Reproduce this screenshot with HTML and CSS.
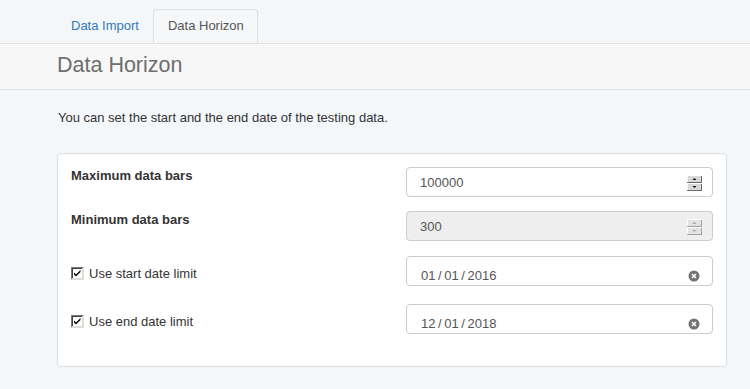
FILE: index.html
```html
<!DOCTYPE html>
<html lang="en">
<head>
    <meta charset="UTF-8">
    <meta name="viewport" content="width=device-width, initial-scale=1.0">
    <title>Data Horizon</title>
    <link rel="stylesheet" href="styles.css">
</head>
<body>
    <ul class="tabs">
        <li class="tab"><a href="#">Data Import</a></li>
        <li class="tab active"><a href="#">Data Horizon</a></li>
    </ul>

    <div class="page-header">
        <h1>Data Horizon</h1>
    </div>

    <div class="content">
        <p class="intro">You can set the start and the end date of the testing data.</p>

        <div class="panel">
            <div class="row row-max">
                <label class="label-bold">Maximum data bars</label>
                <div class="field">
                    <span class="value">100000</span>
                    <svg class="spin" width="15" height="16" viewBox="0 0 15 16">
                        <rect x="0" y="0" width="15" height="16" fill="#d8d8d8"/>
                        <path d="M0 0H15V1H1V7H0Z M0 8H15V9H1V15H0Z" fill="#fff"/>
                        <path d="M14 1H15V8H0V7H14Z M14 9H15V16H0V15H14Z" fill="#6a6a6a"/>
                        <path d="M5.5 5H9.5L7.5 3Z" fill="#000"/>
                        <path d="M5.5 11H9.5L7.5 13Z" fill="#000"/>
                    </svg>
                </div>
            </div>

            <div class="row row-min">
                <label class="label-bold">Minimum data bars</label>
                <div class="field disabled">
                    <span class="value">300</span>
                    <svg class="spin" width="15" height="16" viewBox="0 0 15 16">
                        <rect x="0" y="0" width="15" height="16" fill="#e2e2e2"/>
                        <path d="M0 0H15V1H1V7H0Z M0 8H15V9H1V15H0Z" fill="#fff"/>
                        <path d="M14 1H15V8H0V7H14Z M14 9H15V16H0V15H14Z" fill="#a0a0a0"/>
                        <path d="M5.5 5H9.5L7.5 3Z" fill="#a5a5a5"/>
                        <path d="M5.5 11H9.5L7.5 13Z" fill="#a5a5a5"/>
                    </svg>
                </div>
            </div>

            <div class="row row-start">
                <label class="check">
                    <svg class="box" width="13" height="13" viewBox="0 0 13 13">
                        <rect x="0" y="0" width="13" height="13" fill="#dcdcdc"/>
                        <path d="M0 0H12V1H1V12H0Z" fill="#7a7a7a"/>
                        <path d="M1 1H11V2H2V11H1Z" fill="#404040"/>
                        <rect x="2" y="2" width="9" height="9" fill="#fff"/>
                        <path d="M3 5.5L5 7.5L9.5 3V5L5 9.5L3 7.5Z" fill="#000"/>
                    </svg>
                    <span>Use start date limit</span>
                </label>
                <div class="field date">
                    <span class="value">01 / 01 / 2016</span>
                    <svg class="clear" width="12" height="12" viewBox="0 0 12 12">
                        <circle cx="6" cy="6" r="5.5" fill="#737373"/>
                        <path d="M4 4L8 8M8 4L4 8" stroke="#fff" stroke-width="1.5"/>
                    </svg>
                </div>
            </div>

            <div class="row row-end">
                <label class="check">
                    <svg class="box" width="13" height="13" viewBox="0 0 13 13">
                        <rect x="0" y="0" width="13" height="13" fill="#dcdcdc"/>
                        <path d="M0 0H12V1H1V12H0Z" fill="#7a7a7a"/>
                        <path d="M1 1H11V2H2V11H1Z" fill="#404040"/>
                        <rect x="2" y="2" width="9" height="9" fill="#fff"/>
                        <path d="M3 5.5L5 7.5L9.5 3V5L5 9.5L3 7.5Z" fill="#000"/>
                    </svg>
                    <span>Use end date limit</span>
                </label>
                <div class="field date">
                    <span class="value">12 / 01 / 2018</span>
                    <svg class="clear" width="12" height="12" viewBox="0 0 12 12">
                        <circle cx="6" cy="6" r="5.5" fill="#737373"/>
                        <path d="M4 4L8 8M8 4L4 8" stroke="#fff" stroke-width="1.5"/>
                    </svg>
                </div>
            </div>
        </div>
    </div>
</body>
</html>
```

FILE: styles.css
```css
body {
    margin: 0;
    background-color: #f3f7fa;
    font-family: "Liberation Sans", Arial, sans-serif;
    font-size: 13px;
    color: #333;
}
.tabs {
    display: flex;
    list-style: none;
    margin: 0;
    padding: 9px 0 0 56px;
}
.tab a {
    display: block;
    padding: 6px 13px 7px 14px;
    line-height: 20px;
    color: #337ab7;
    text-decoration: none;
    border: 1px solid transparent;
    border-bottom: none;
    border-radius: 4px 4px 0 0;
}
.tab.active a {
    color: #555;
    background: #f5f7f9;
    border-color: #dcdfe2;
}
.page-header {
    background: #f7f7f7;
    border-top: 1px solid #e1e1e1;
    border-bottom: 1px solid #e1e1e1;
    padding: 0 0 0 57px;
}
.page-header h1 {
    margin: 0;
    line-height: 43px;
    padding-bottom: 2px;
    font-size: 21.5px;
    font-weight: normal;
    color: #6e6e6e;
}
.content {
    padding: 0 23px 0 57px;
}
.intro {
    margin: 19px 0 26px 1px;
    line-height: 18px;
}
.panel {
    background: #fff;
    border: 1px solid #dcdfe2;
    border-radius: 4px;
    padding: 13px 13px 32px 13px;
}
.row {
    display: grid;
    grid-template-columns: 335px 307px;
}
.row-max { margin-bottom: 14px; }
.row-min { margin-bottom: 15px; }
.row-start { margin-bottom: 18px; }
.label-bold {
    font-weight: bold;
    line-height: 15px;
    padding-top: 1px;
}
.check {
    display: flex;
    align-items: center;
    padding-top: 5px;
}
.check .box {
    margin-right: 5px;
}
.field {
    display: flex;
    align-items: center;
    justify-content: space-between;
    height: 30px;
    box-sizing: border-box;
    border: 1px solid #ccc;
    border-radius: 4px;
    padding: 0 10px 0 13px;
    color: #555;
    background: #fff;
}
.field .spin {
    margin-top: 2px;
}
.field.disabled {
    background: #eee;
}
.field.date {
    padding: 9px 12px 0 14px;
    word-spacing: -1px;
}
```
